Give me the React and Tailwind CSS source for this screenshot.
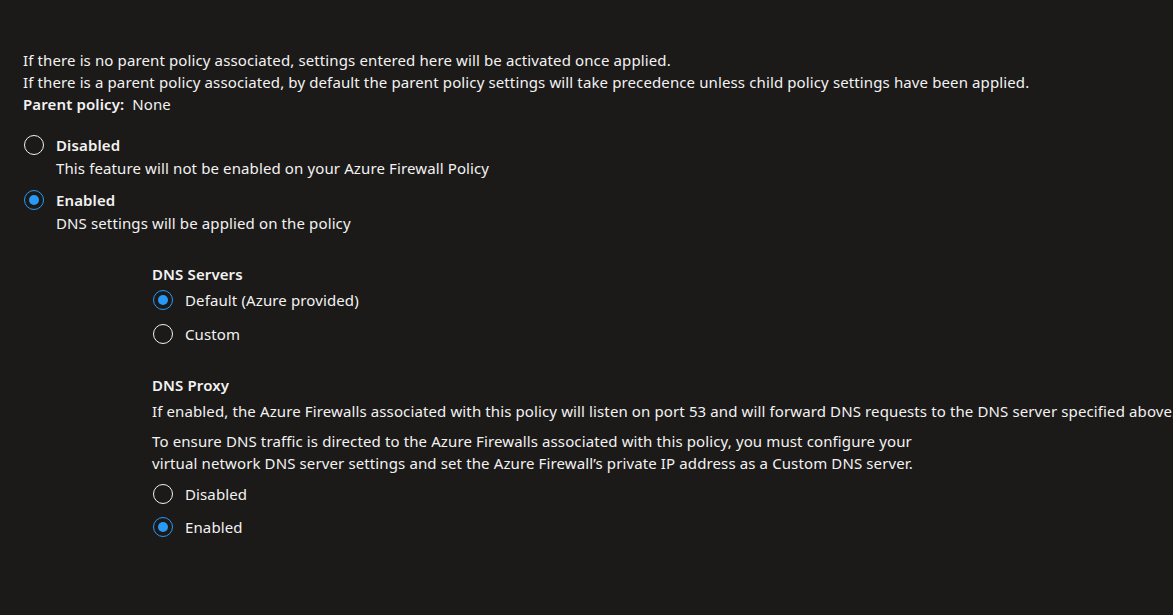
import React from 'react';

const Radio = ({ checked }) => (
  <span
    className={`inline-flex h-5 w-5 shrink-0 items-center justify-center rounded-full border ${
      checked ? 'border-[#2899f5]' : 'border-[#f3f2f1]'
    }`}
  >
    {checked && <span className="h-[10px] w-[10px] rounded-full bg-[#2899f5]" />}
  </span>
);

const Option = ({ checked, label, bold, className = '' }) => (
  <div className={`flex h-[22px] items-center gap-3 ${className}`}>
    <Radio checked={checked} />
    <span className={bold ? 'font-semibold' : ''}>{label}</span>
  </div>
);

const App = () => {
  return (
    <div
      className="h-[615px] w-[1173px] overflow-hidden bg-[#1b1a19] pl-[23px] pt-[49px] text-[15px] leading-[22px] tracking-[0.12px] text-[#f3f2f1] whitespace-nowrap"
      style={{ fontFamily: '"Noto Sans", sans-serif' }}
    >
      <div>
        <p>If there is no parent policy associated, settings entered here will be activated once applied.</p>
        <p>If there is a parent policy associated, by default the parent policy settings will take precedence unless child policy settings have been applied.</p>
        <p>
          <span className="font-semibold">Parent policy:</span>
          <span className="ml-2">None</span>
        </p>
      </div>

      {/* top level choice */}
      <div className="mt-[19px] pl-px">
        <Option label="Disabled" bold />
        <p className="mt-px pl-[32px]">This feature will not be enabled on your Azure Firewall Policy</p>
        <Option label="Enabled" bold checked className="mt-[10px]" />
        <p className="mt-px pl-[32px]">DNS settings will be applied on the policy</p>
      </div>

      {/* DNS settings */}
      <div className="pl-[129px]">
        <h3 className="mt-[29px] font-semibold">DNS Servers</h3>
        <div className="pl-px">
          <Option label="Default (Azure provided)" checked className="mt-[4px]" />
          <Option label="Custom" className="mt-[12px]" />
        </div>

        <h3 className="mt-[29px] font-semibold">DNS Proxy</h3>
        <p className="mt-[4px]">
          If enabled, the Azure Firewalls associated with this policy will listen on port 53 and will forward DNS requests to the DNS server specified above.
        </p>
        <p className="mt-[8px]">
          To ensure DNS traffic is directed to the Azure Firewalls associated with this policy, you must configure your
          <br />
          virtual network DNS server settings and set the Azure Firewall’s private IP address as a Custom DNS server.
        </p>
        <div className="pl-px">
          <Option label="Disabled" className="mt-[9px]" />
          <Option label="Enabled" checked className="mt-[11px]" />
        </div>
      </div>
    </div>
  );
};

export default App;
